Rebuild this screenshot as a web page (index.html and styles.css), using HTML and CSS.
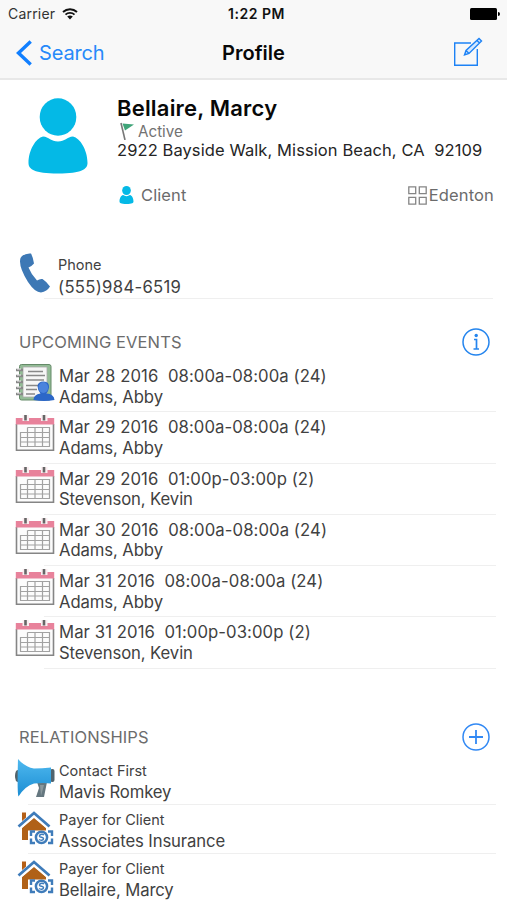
FILE: index.html
```
<!DOCTYPE html>
<html lang="en">
<head>
<meta charset="utf-8">
<title>Profile</title>
<link rel="stylesheet" href="styles.css">
</head>
<body>
<svg class="defs" aria-hidden="true">
  <symbol id="person" viewBox="0 0 60 76">
    <ellipse cx="30" cy="19" rx="18.3" ry="18.7"/>
    <path d="M15 38.5C21 39 23 43.500 30 43.500S39 39 45 38.500C52 40 59.500 52 59.500 65C59.500 71 54 75.500 30 75.500S.5 71 .5 65C.5 52 8 40 15 38.500Z"/>
  </symbol>
  <symbol id="calendar" viewBox="0 0 40 37">
    <path d="M1.500 9V35.300H38.500V9" fill="#fcfcfc" stroke="#858585" stroke-width="1.600"/>
    <path d="M.8 3H39.200V9.500H.8Z" fill="#e8829b"/>
    <path d="M7.500 0H14V6H7.500ZM26 0H32.500V6H26Z" fill="#fbeef1"/>
    <path d="M10.500 0V5.500M29 0V5.500" stroke="#666" stroke-width="2.600"/>
    <path d="M12.500 12.500H34.500V31.500H5.500V17.500H34.500M12.500 12.500V31.500M20 12.500V31.500M27.500 12.500V31.500M5.500 22.500H34.500M5.500 27H34.500" fill="none" stroke="#a2a2a2" stroke-width="1.200"/>
  </symbol>
  <symbol id="house" viewBox="0 0 40 36">
    <path d="M7 2.500H11V10L7 14Z" fill="#b45f17"/>
    <path d="M19 8L31 18V30H7V18Z" fill="#b06118"/>
    <path d="M13 20.500H40V36H13Z" fill="#fff"/>
    <path d="M3.500 17.500L19 4L34.500 17.500" fill="none" stroke="#fff" stroke-width="5"/>
    <path d="M3.500 16.500L19 3L34.500 16.500" fill="none" stroke="#3f7cba" stroke-width="2.800"/>
    <path d="M20 21.500H16V26M33 21.500H37V26M37 28.500V33H33M20 33H16V28.500" fill="none" stroke="#3f7cba" stroke-width="2.400"/>
    <circle cx="26.500" cy="27.300" r="5.600" fill="#fff" stroke="#3f7cba" stroke-width="2.500"/>
    <path d="M29 25C27 23.500 24 24.500 24.500 26.300C25 27.800 28.500 26.800 28.500 28.800C28.500 30.500 25.500 30.500 24 29.500" fill="none" stroke="#3f7cba" stroke-width="1.500"/>
  </symbol>
</svg>
<header class="header">
  <div class="status">
    <div class="carrier"><span>Carrier</span>
      <svg width="16" height="12" viewBox="0 0 16 12"><path d="M1 4C5 .3 11 .3 15 4M3.500 6.600C6 4.300 10 4.300 12.500 6.600" fill="none" stroke="#111" stroke-width="1.900"/><path d="M5.200 8.500Q8 6.300 10.800 8.500L8 11.500Z" fill="#111"/></svg>
    </div>
    <div class="time">1:22 PM</div>
    <svg class="battery" width="30" height="12" viewBox="0 0 30 12"><rect width="27" height="12" rx="1.500"/><path d="M28 4Q30 4 30 6T28 8Z"/></svg>
  </div>
  <nav class="nav">
    <div class="back">
      <svg width="17" height="26" viewBox="0 0 17 26"><path d="M14.700 1.500L2.500 13L14.700 24.500" fill="none" stroke="#117fff" stroke-width="3.400"/></svg>
      <span>Search</span>
    </div>
    <h1 class="title">Profile</h1>
    <svg class="edit" width="30" height="30" viewBox="0 0 30 30" fill="none" stroke="#1d82f5" stroke-width="1.400"><path d="M18 6H1.700V28.300H24.300V12"/><path d="M11.500 18L13 13.500L26 1.500L28.500 4L16 16.500ZM24 3.500L26.500 6M13 13.500L16 16.500" fill="#d4e8ff"/></svg>
  </nav>
</header>
<main>
  <section class="profile">
    <svg class="avatar" width="60" height="76"><use href="#person"/></svg>
    <div class="details">
      <h2 class="name">Bellaire, Marcy</h2>
      <div class="state"><svg width="16" height="18" viewBox="0 0 16 18"><path d="M2 1L6 18" stroke="#777" stroke-width="1.600"/><path d="M3.500 1.500L15 2.500L6 8.500Z" fill="#3fa478"/></svg><span>Active</span></div>
      <div class="address">2922 Bayside Walk, Mission Beach, CA  92109</div>
      <div class="tags">
        <div class="tag client"><svg width="15" height="18"><use href="#person"/></svg><span>Client</span></div>
        <div class="tag place"><svg width="19" height="19" viewBox="0 0 19 19" fill="none" stroke="#858585" stroke-width="1.300"><path d="M.8 .8H7.700V7.700H.8ZM11.300 .8H18.200V7.700H11.300ZM.8 11.300H7.700V18.200H.8ZM11.300 11.300H18.200V18.200H11.300Z"/></svg><span>Edenton</span></div>
      </div>
    </div>
  </section>
  <section class="phone">
    <svg width="30" height="40" viewBox="0 0 30 40"><path d="M2 3Q6 0 11 .5Q13 4 14 10.500Q12 13 8.500 14.500Q11 21 17 27.500Q20 25.500 22.500 26Q27 29 30 33.500Q27 38.500 21 39.500Q15 39.500 8 29Q-2 13 .5 5Z" fill="#3d78b5"/></svg>
    <div class="phone-text"><div class="small">Phone</div><div class="large number">(555)984-6519</div></div>
  </section>
  <section class="events">
    <div class="section-head"><h3 class="upcoming">UPCOMING EVENTS</h3><svg width="28" height="28" viewBox="0 0 28 28" fill="none" stroke="#2585ee" stroke-width="1.500"><circle cx="14" cy="14" r="13"/><path d="M12 11.500H14.500V21M11.500 21H17" stroke-width="1.700"/><circle cx="14.200" cy="7.500" r="1.700" fill="#2585ee" stroke="none"/></svg></div>
    <div class="event"><svg class="notebook" width="40" height="40" viewBox="0 0 40 40">
      <rect x="4.500" y="1.500" width="31.500" height="35.500" rx="2" fill="#93bc96" stroke="#658a68"/>
      <path d="M8 4H32V34H8Z" fill="#f6f6f6" stroke="#aaa" stroke-width=".8"/>
      <path d="M13 8.500H28M11 12.500H30M11 17H29M11 22.500H23M11 26.500H22M11 31H20" stroke="#888" stroke-width="1.400"/>
      <path d="M1 7H8M1 13H8M1 19H8M1 25H8M1 31H8" stroke="#888" stroke-width="2.600"/><path d="M2 6H6M2 12H6M2 18H6M2 24H6M2 30H6" stroke="#eee"/>
      <path d="M18.500 37Q18.500 31.500 25.500 30.500Q22.500 27 22.500 23Q23 18.500 28.500 18.500Q34.500 18.500 34 24.500Q33.500 28 31.500 30.500Q39 31 39.500 37Q29 39 18.500 37Z" fill="#2c67c8"/><ellipse cx="28.300" cy="24.500" rx="4.800" ry="5.400" fill="#4a83dd"/></svg><div><div class="large when">Mar 28 2016  08:00a-08:00a (24)</div><div class="large who">Adams, Abby</div></div></div>
    <div class="event"><svg width="40" height="37"><use href="#calendar"/></svg><div><div class="large when">Mar 29 2016  08:00a-08:00a (24)</div><div class="large who">Adams, Abby</div></div></div>
    <div class="event"><svg width="40" height="37"><use href="#calendar"/></svg><div><div class="large when">Mar 29 2016  01:00p-03:00p (2)</div><div class="large who">Stevenson, Kevin</div></div></div>
    <div class="event"><svg width="40" height="37"><use href="#calendar"/></svg><div><div class="large when">Mar 30 2016  08:00a-08:00a (24)</div><div class="large who">Adams, Abby</div></div></div>
    <div class="event"><svg width="40" height="37"><use href="#calendar"/></svg><div><div class="large when">Mar 31 2016  08:00a-08:00a (24)</div><div class="large who">Adams, Abby</div></div></div>
    <div class="event"><svg width="40" height="37"><use href="#calendar"/></svg><div><div class="large when">Mar 31 2016  01:00p-03:00p (2)</div><div class="large who">Stevenson, Kevin</div></div></div>
  </section>
  <section class="relations">
    <div class="section-head"><h3 class="relationships">RELATIONSHIPS</h3><svg width="28" height="28" viewBox="0 0 28 28" fill="none" stroke="#3289f4" stroke-width="1.500"><circle cx="14" cy="14" r="13"/><path d="M7 14H21M14 7V21" stroke-width="1.800"/></svg></div>
    <div class="relation"><svg class="horn" width="40" height="40" viewBox="0 0 40 40">
      <defs><linearGradient id="blue" x2="0" y2="1"><stop stop-color="#4fb9ef"/><stop offset="1" stop-color="#1b8dd3"/></linearGradient></defs>
      <path d="M22 24L32 24L29 39H21L24 30Z" fill="#65777f"/><path d="M25 27L29 27L26 38" fill="#8b999e"/>
      <ellipse cx="2.500" cy="18" rx="2.500" ry="6" fill="#53636a"/><rect x="35" y="11" width="4.500" height="13" rx="2" fill="#50636d"/>
      <path d="M3 1Q10 9 19 10.500Q27 10.500 36 9.500V25.500Q28 24.500 19 25.500Q10 28 3.500 38.500Q2 35 3 1Z" fill="url(#blue)"/></svg><div><div class="small contact">Contact First</div><div class="large person">Mavis Romkey</div></div></div>
    <div class="relation"><svg width="40" height="36"><use href="#house"/></svg><div><div class="small payer">Payer for Client</div><div class="large person">Associates Insurance</div></div></div>
    <div class="relation"><svg width="40" height="36"><use href="#house"/></svg><div><div class="small payer">Payer for Client</div><div class="large person">Bellaire, Marcy</div></div></div>
  </section>
</main>
</body>
</html>
```
FILE: styles.css
```
* { box-sizing: border-box; }
body { margin: 0; height: 900px; overflow: hidden; background: #fff; color: #414141; font-family: Inter, "Liberation Sans", sans-serif; }
h1, h2, h3 { margin: 0; font-weight: 400; }
svg { display: block; flex: none; }
.defs { display: none; }
.header { height: 80px; background: #f8f8f8; border-bottom: 2px solid #e8e8e8; }
.status { height: 27px; display: grid; grid-template-columns: 1fr 1fr 1fr; align-items: center; padding: 0 7px 0 8px; }
.carrier { display: flex; align-items: center; gap: 7px; font-size: 14px; letter-spacing: .2px; color: #333; }
.time { justify-self: center; padding-left: 5px; font-size: 14px; font-weight: 600; letter-spacing: .5px; color: #111; }
.battery { justify-self: end; }
.nav { height: 51px; display: grid; grid-template-columns: 1fr auto 1fr; align-items: center; padding: 0 24px 0 24px; }
.back { display: flex; align-items: center; gap: 6px; margin-left: -8px; font-size: 20px; letter-spacing: -.15px; color: #2689fa; }
.title { justify-self: center; font-size: 20px; font-weight: 600; color: #080808; }
.edit { justify-self: end; margin-bottom: 1px; }
.profile { display: flex; height: 160px; padding: 18px 13px 0 28px; gap: 29px; }
.details { flex: 1; margin-top: -4px; }
.name { font-size: 22px; line-height: 28px; font-weight: 600; letter-spacing: .2px; color: #080808; }
.state { display: flex; gap: 3px; height: 18px; padding-left: 2px; align-items: center; font-size: 15.2px; color: #727272; }
.address { font-size: 16.5px; line-height: 21px; letter-spacing: .09px; color: #252525; white-space: pre; }
.tags { display: flex; justify-content: space-between; margin-top: 23px; }
.tag { display: flex; align-items: center; line-height: 22px; font-size: 16.5px; color: #6b6b6b; }
.client { gap: 7px; padding-left: 2px; letter-spacing: .1px; }
.place { gap: 2px; letter-spacing: .15px; }
.avatar, .client svg { fill: #04b9e6; }
.phone { display: flex; height: 59px; margin-left: 20px; margin-right: 14px; padding-top: 13px; gap: 8px; background: linear-gradient(#efefef, #efefef) 24px 100% / 100% 1px no-repeat; }
.phone-text { padding-top: 2px; }
.small { font-size: 14.5px; line-height: 20px; }
.large { font-size: 16.7px; line-height: 20.5px; white-space: pre; }
.number { line-height: 24px; letter-spacing: .3px; }
.when { letter-spacing: .08px; }
.who { letter-spacing: -.1px; line-height: 20px; }
.person { letter-spacing: -.12px; }
.section-head { display: flex; align-items: center; justify-content: space-between; padding: 25px 17px 0 19px; color: #6c6c6c; }
.section-head h3 { font-size: 16.5px; letter-spacing: .1px; }
.event { height: 51.3px; display: flex; gap: 4px; padding: 5px 0 0 15px; margin-right: 11px; background: linear-gradient(#efefef, #efefef) 44px 100% / 100% 1px no-repeat; }
.event > svg { margin-top: -2px; }
.event > .notebook { margin-top: -3px; }
.events .section-head { height: 62px; padding-top: 23px; }
.relations { margin-top: 30px; }
.relations .section-head { height: 57px; padding-top: 20px; }
.relation { height: 48.9px; display: flex; gap: 4px; padding: 5px 0 0 15px; margin-right: 11px; background: linear-gradient(#efefef, #efefef) 28px 100% / 100% 1px no-repeat; }
.relation .person { line-height: 23px; }
.relation > svg { margin-top: 0; }
.relation > .horn { margin-top: -3px; }
```
